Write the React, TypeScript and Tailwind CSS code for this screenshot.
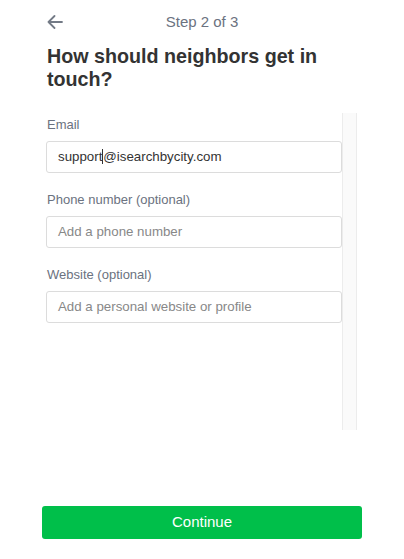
const fields = [
  { label: 'Email', value: 'support@isearchbycity.com', placeholder: '' },
  { label: 'Phone number (optional)', value: '', placeholder: 'Add a phone number' },
  { label: 'Website (optional)', value: '', placeholder: 'Add a personal website or profile' },
]

export default function App() {
  return (
    <div className="w-[404px] h-[559px] bg-white flex flex-col font-['Liberation_Sans',Arial,sans-serif] text-[#333]">
      <div className="relative h-[44px] flex items-center justify-center">
        <svg width="16" height="14" viewBox="0 0 16 14" className="absolute left-[47px] top-[15px]" fill="none" stroke="#737a86" strokeWidth="1.8" strokeLinecap="round" strokeLinejoin="round">
          <path d="M15 7H1.5M7.5 1L1.5 7l6 6" />
        </svg>
        <span className="text-[15px] text-[#6b7280]">Step 2 of 3</span>
      </div>
      <h1 className="px-[47px] pt-[1px] text-[19.7px] leading-[23px] font-bold text-[#333]">
        How should neighbors get in touch?
      </h1>
      <div className="mt-[22px] ml-[46px] w-[311px] h-[317px] flex">
        <div className="flex-1 flex flex-col pt-[5px]">
          {fields.map((f) => (
            <div key={f.label} className="mb-[20px]">
              <label className="block pl-[1px] text-[13px] leading-[14px] text-[#6b7280]">{f.label}</label>
              <div className="mt-[9px] h-[32px] border border-[#dcdcdc] rounded-[3px] flex items-center px-[11px] text-[13.3px]">
                {f.value ? (
                  <span className="text-[#333]">
                    support<span className="inline-block w-px h-[15px] bg-[#333] align-middle -mt-[2px]" />@isearchbycity.com
                  </span>
                ) : (
                  <span className="text-[#888]">{f.placeholder}</span>
                )}
              </div>
            </div>
          ))}
        </div>
        <div className="w-[15px] bg-[#fafafa] border-l border-r border-[#ececec]" />
      </div>
      <div className="flex-1" />
      <div className="px-[42px] pb-[20px]">
        <button className="w-[320px] h-[33px] rounded-[3px] bg-[#00bf4a] text-white text-[15px]">Continue</button>
      </div>
    </div>
  )
}
